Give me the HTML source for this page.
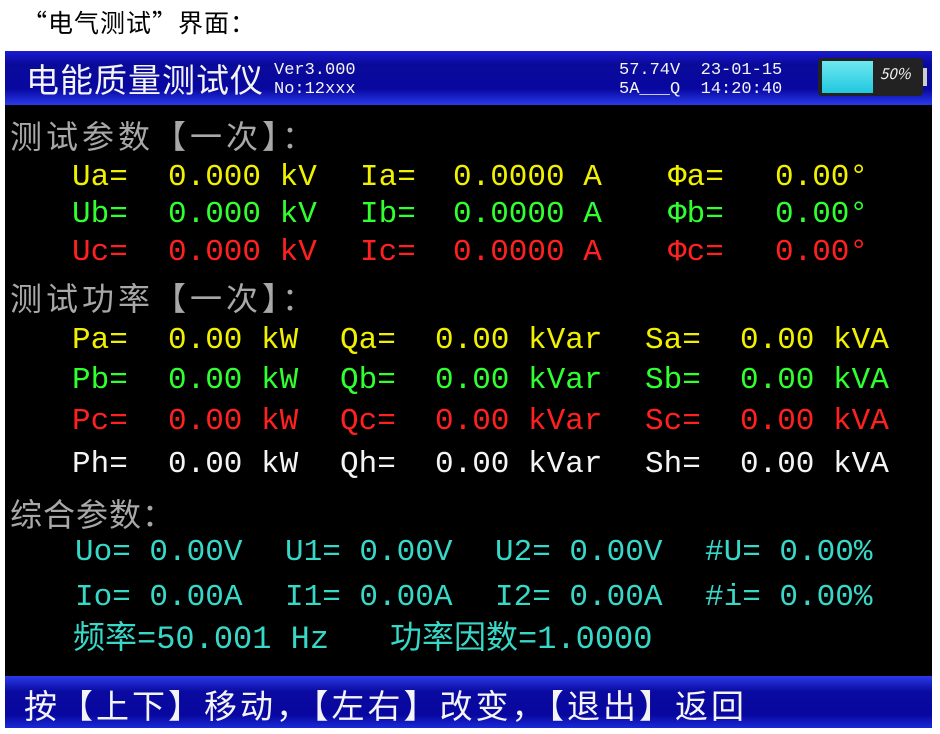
<!DOCTYPE html>
<html><head><meta charset="utf-8"><style>
body{margin:0;width:940px;height:734px;background:#fff;position:relative;overflow:hidden;font-family:"Liberation Sans","Noto Sans CJK SC",sans-serif}
.t{position:absolute;font-family:"Liberation Mono","Noto Sans CJK SC",monospace;font-size:31px;line-height:34px;white-space:pre}
.c{position:absolute;font-family:"Noto Sans CJK SC",sans-serif;white-space:pre}
.y{color:#f0f000}.g{color:#30ff30}.r{color:#ff2020}.w{color:#f4f4f4}.q{color:#38d8c8}.gr{color:#a8a8a8}
</style></head><body>
<div class="c" style="left:22px;top:4px;font-size:25px;line-height:36px;color:#000;letter-spacing:1px">“电气测试”界面：</div>
<div style="position:absolute;left:5px;top:51px;width:927px;height:677px;background:#000"></div>
<div style="position:absolute;left:5px;top:51px;width:927px;height:54px;background:linear-gradient(#1a1ad0,#0a0a9a 25%,#0808a0 70%,#2a3ae8)"></div>
<div style="position:absolute;left:5px;top:676px;width:927px;height:52px;background:linear-gradient(#2a3ae8,#0a0aa0 30%,#0808a0 75%,#1a2ad8)"></div>
<div class="c w" style="left:26px;top:57px;font-size:33px;line-height:42px;letter-spacing:1px">电能质量测试仪</div>
<div class="t w" style="left:274px;top:61px;font-size:17px;line-height:19px">Ver3.000
No:12xxx</div>
<div class="t w" style="left:619px;top:61px;font-size:17px;line-height:19px">57.74V  23-01-15
5A___Q  14:20:40</div>
<div style="position:absolute;left:818px;top:58px;width:105px;height:38px;background:#222;border-radius:4px"></div>
<div style="position:absolute;left:822px;top:61px;width:51px;height:32px;background:linear-gradient(#6ee8f0,#20c8e0)"></div>
<div style="position:absolute;left:923px;top:68px;width:4px;height:18px;background:#ccc"></div>
<div class="c w" style="left:880px;top:63px;font-size:15px;font-style:italic">50%</div>

<div class="c gr" style="left:10px;top:115px;font-size:32px;line-height:40px;letter-spacing:4px">测试参数【一次】：</div>
<div class="t y" style="left:72px;top:161px">Ua=</div><div class="t y" style="left:168px;top:161px">0.000 kV</div><div class="t y" style="left:360px;top:161px">Ia=</div><div class="t y" style="left:453px;top:161px">0.0000 A</div><div class="t y" style="left:668px;top:161px">Φa=</div><div class="t y" style="left:775px;top:161px">0.00°</div>
<div class="t g" style="left:72px;top:198px">Ub=</div><div class="t g" style="left:168px;top:198px">0.000 kV</div><div class="t g" style="left:360px;top:198px">Ib=</div><div class="t g" style="left:453px;top:198px">0.0000 A</div><div class="t g" style="left:668px;top:198px">Φb=</div><div class="t g" style="left:775px;top:198px">0.00°</div>
<div class="t r" style="left:72px;top:236px">Uc=</div><div class="t r" style="left:168px;top:236px">0.000 kV</div><div class="t r" style="left:360px;top:236px">Ic=</div><div class="t r" style="left:453px;top:236px">0.0000 A</div><div class="t r" style="left:668px;top:236px">Φc=</div><div class="t r" style="left:775px;top:236px">0.00°</div>

<div class="c gr" style="left:10px;top:277px;font-size:32px;line-height:40px;letter-spacing:4px">测试功率【一次】：</div>
<div class="t y" style="left:72px;top:324px">Pa=</div><div class="t y" style="left:168px;top:324px">0.00 kW</div><div class="t y" style="left:340px;top:324px">Qa=</div><div class="t y" style="left:435px;top:324px">0.00 kVar</div><div class="t y" style="left:645px;top:324px">Sa=</div><div class="t y" style="left:740px;top:324px">0.00 kVA</div>
<div class="t g" style="left:72px;top:364px">Pb=</div><div class="t g" style="left:168px;top:364px">0.00 kW</div><div class="t g" style="left:340px;top:364px">Qb=</div><div class="t g" style="left:435px;top:364px">0.00 kVar</div><div class="t g" style="left:645px;top:364px">Sb=</div><div class="t g" style="left:740px;top:364px">0.00 kVA</div>
<div class="t r" style="left:72px;top:405px">Pc=</div><div class="t r" style="left:168px;top:405px">0.00 kW</div><div class="t r" style="left:340px;top:405px">Qc=</div><div class="t r" style="left:435px;top:405px">0.00 kVar</div><div class="t r" style="left:645px;top:405px">Sc=</div><div class="t r" style="left:740px;top:405px">0.00 kVA</div>
<div class="t w" style="left:72px;top:448px">Ph=</div><div class="t w" style="left:168px;top:448px">0.00 kW</div><div class="t w" style="left:340px;top:448px">Qh=</div><div class="t w" style="left:435px;top:448px">0.00 kVar</div><div class="t w" style="left:645px;top:448px">Sh=</div><div class="t w" style="left:740px;top:448px">0.00 kVA</div>

<div class="c gr" style="left:10px;top:493px;font-size:32px;line-height:40px;letter-spacing:1px">综合参数：</div>
<div class="t q" style="left:75px;top:536px">Uo= 0.00V</div><div class="t q" style="left:285px;top:536px">U1= 0.00V</div><div class="t q" style="left:495px;top:536px">U2= 0.00V</div><div class="t q" style="left:705px;top:536px">#U= 0.00%</div>
<div class="t q" style="left:75px;top:581px">Io= 0.00A</div><div class="t q" style="left:285px;top:581px">I1= 0.00A</div><div class="t q" style="left:495px;top:581px">I2= 0.00A</div><div class="t q" style="left:705px;top:581px">#i= 0.00%</div>
<div class="t q" style="left:73px;top:623px;font-size:32px">频率=50.001 Hz</div><div class="t q" style="left:390px;top:623px;font-size:32px">功率因数=1.0000</div>

<div class="c w" style="left:24px;top:683px;font-size:33px;line-height:42px;letter-spacing:3px">按【上下】移动，【左右】改变，【退出】返回</div>
</body></html>
